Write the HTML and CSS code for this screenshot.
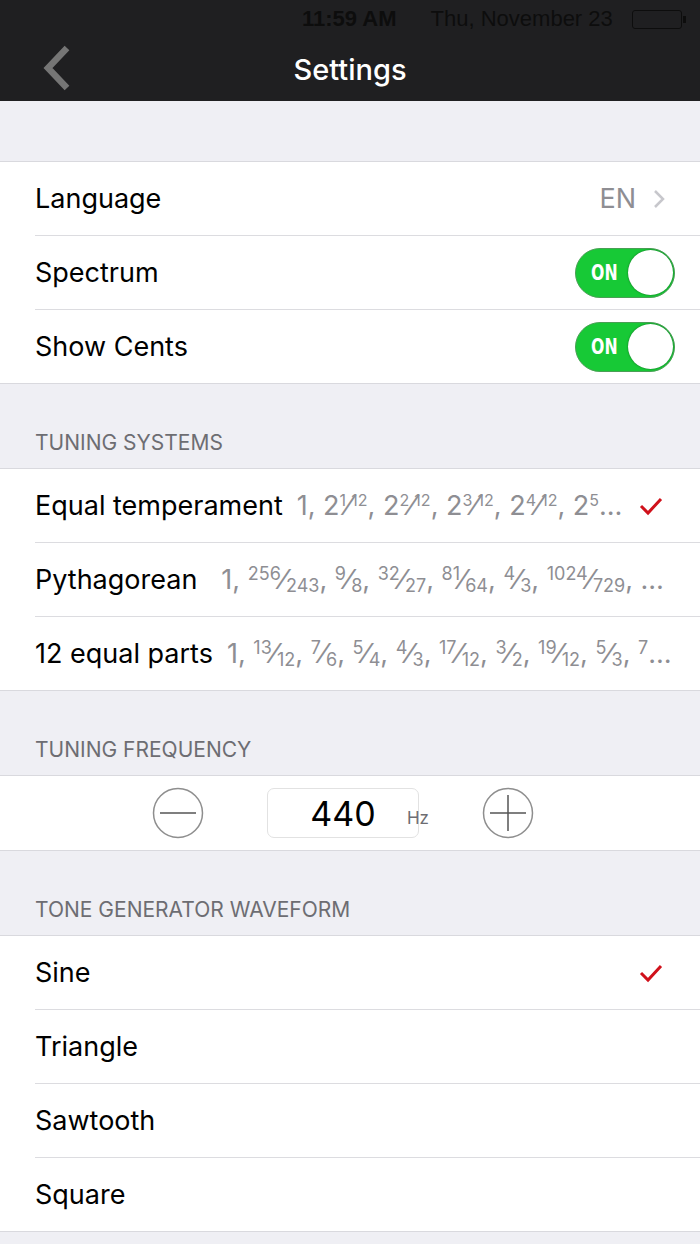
FILE: index.html
```html
<!DOCTYPE html>
<html lang="en">
<head>
    <meta charset="UTF-8">
    <meta name="viewport" content="width=device-width, initial-scale=1.0">
    <title>Settings</title>
    <link rel="stylesheet" href="styles.css">
</head>
<body>
    <header class="topbar">
        <div class="status">
            <span class="status-time">11:59 AM</span>
            <span class="status-date">Thu, November 23</span>
            <span class="battery"><span class="battery-cap"></span></span>
        </div>
        <div class="navbar">
            <svg class="back" width="32" height="46" viewBox="0 0 32 46">
                <path d="M27 3 L8 23 L27 43" fill="none" stroke="#757575" stroke-width="6.5"/>
            </svg>
            <h1>Settings</h1>
        </div>
    </header>

    <div class="spacer"></div>

    <ul class="group">
        <li class="row">
            <span class="label">Language</span>
            <span class="detail">EN</span>
            <svg class="chevron" width="14" height="20" viewBox="0 0 14 20">
                <path d="M3 2 L11 10 L3 18" fill="none" stroke="#c7c7cc" stroke-width="2.5"/>
            </svg>
        </li>
        <li class="row">
            <span class="label">Spectrum</span>
            <span class="switch"><span class="switch-text">ON</span><span class="knob"></span></span>
        </li>
        <li class="row">
            <span class="label">Show Cents</span>
            <span class="switch"><span class="switch-text">ON</span><span class="knob"></span></span>
        </li>
    </ul>

    <h2 class="group-title">TUNING SYSTEMS</h2>
    <ul class="group">
        <li class="row">
            <span class="label">Equal temperament</span>
            <span class="values powers">1, 2<sup>1</sup>&frasl;<sup>12</sup>, 2<sup>2</sup>&frasl;<sup>12</sup>, 2<sup>3</sup>&frasl;<sup>12</sup>, 2<sup>4</sup>&frasl;<sup>12</sup>, 2<sup>5</sup>&frasl;<sup>12</sup>, 2<sup>6</sup>&frasl;<sup>12</sup></span>
            <svg class="check" width="24" height="20" viewBox="0 0 24 20">
                <path d="M2 10 L9 17 L22 3" fill="none" stroke="#d0111b" stroke-width="3"/>
            </svg>
        </li>
        <li class="row">
            <span class="label">Pythagorean</span>
            <span class="values wide">1, <sup>256</sup>&frasl;<sub>243</sub>, <sup>9</sup>&frasl;<sub>8</sub>, <sup>32</sup>&frasl;<sub>27</sub>, <sup>81</sup>&frasl;<sub>64</sub>, <sup>4</sup>&frasl;<sub>3</sub>, <sup>1024</sup>&frasl;<sub>729</sub>, <sup>3</sup>&frasl;<sub>2</sub>, <sup>128</sup>&frasl;<sub>81</sub></span>
        </li>
        <li class="row">
            <span class="label">12 equal parts</span>
            <span class="values">1, <sup>13</sup>&frasl;<sub>12</sub>, <sup>7</sup>&frasl;<sub>6</sub>, <sup>5</sup>&frasl;<sub>4</sub>, <sup>4</sup>&frasl;<sub>3</sub>, <sup>17</sup>&frasl;<sub>12</sub>, <sup>3</sup>&frasl;<sub>2</sub>, <sup>19</sup>&frasl;<sub>12</sub>, <sup>5</sup>&frasl;<sub>3</sub>, <sup>7</sup>&frasl;<sub>4</sub>, <sup>23</sup>&frasl;<sub>12</sub></span>
        </li>
    </ul>

    <h2 class="group-title">TUNING FREQUENCY</h2>
    <div class="group freq">
        <svg class="round-btn" width="52" height="52" viewBox="0 0 52 52">
            <circle cx="26" cy="26" r="24.5" fill="none" stroke="#8e8e8e" stroke-width="1.5"/>
            <path d="M8 26 H44" stroke="#555" stroke-width="1.5"/>
        </svg>
        <div class="freq-box">
            <span class="freq-value">440</span>
            <span class="freq-unit">Hz</span>
        </div>
        <svg class="round-btn" width="52" height="52" viewBox="0 0 52 52">
            <circle cx="26" cy="26" r="24.5" fill="none" stroke="#8e8e8e" stroke-width="1.5"/>
            <path d="M8 26 H44 M26 8 V44" stroke="#555" stroke-width="1.5"/>
        </svg>
    </div>

    <h2 class="group-title">TONE GENERATOR WAVEFORM</h2>
    <ul class="group">
        <li class="row">
            <span class="label">Sine</span>
            <svg class="check" width="24" height="20" viewBox="0 0 24 20">
                <path d="M2 10 L9 17 L22 3" fill="none" stroke="#d0111b" stroke-width="3"/>
            </svg>
        </li>
        <li class="row"><span class="label">Triangle</span></li>
        <li class="row"><span class="label">Sawtooth</span></li>
        <li class="row"><span class="label">Square</span></li>
    </ul>
</body>
</html>
```

FILE: styles.css
```css
body {
    margin: 0;
    background-color: #efeff4;
    font-family: Inter, Roboto, "Liberation Sans", sans-serif;
    color: #000;
}
.topbar {
    background-color: #1f1f21;
    height: 101px;
    display: flex;
    flex-direction: column;
}
.status {
    height: 38px;
    display: flex;
    align-items: center;
    padding-left: 302px;
    font-family: "Liberation Sans", Arial, sans-serif;
    font-size: 22px;
    color: #0d0d0d;
}
.status-time {
    font-weight: bold;
    margin-right: 34px;
}
.status-date {
    margin-right: 19px;
}
.battery {
    width: 48px;
    height: 17px;
    border: 1.5px solid #0d0d0d;
    border-radius: 3px;
    position: relative;
}
.battery-cap {
    position: absolute;
    right: -5px;
    top: 5px;
    width: 3px;
    height: 7px;
    background-color: #0d0d0d;
}
.navbar {
    flex: 1;
    display: flex;
    align-items: center;
    justify-content: center;
    position: relative;
}
.navbar h1 {
    margin: 0;
    font-size: 29px;
    font-weight: 500;
    color: #fff;
}
.back {
    position: absolute;
    left: 40px;
    top: 7px;
}
.spacer {
    height: 60px;
}
.group {
    list-style: none;
    margin: 0;
    padding: 0;
    background-color: #fff;
    border-top: 1px solid #d9d9de;
    border-bottom: 1px solid #d9d9de;
}
.row {
    height: 73px;
    margin-left: 35px;
    padding-right: 25px;
    display: flex;
    align-items: center;
    border-bottom: 1px solid #dcdce0;
    font-size: 27px;
}
.row:last-child {
    border-bottom: none;
}
.label {
    white-space: nowrap;
    flex-shrink: 0;
}
.detail {
    margin-left: auto;
    color: #8e8e93;
    margin-right: 16px;
}
.chevron {
    margin-right: 9px;
}
.switch {
    margin-left: auto;
    width: 100px;
    height: 50px;
    box-sizing: border-box;
    border-radius: 25px;
    background-color: #17c936;
    border: 1.5px solid #4a9f55;
    display: flex;
    align-items: center;
    justify-content: space-between;
    padding: 0 1px 0 15px;
}
.switch-text {
    display: inline-block;
    color: #fff;
    font-family: "DejaVu Sans", sans-serif;
    font-weight: bold;
    font-size: 21px;
    transform: scaleX(0.75);
    transform-origin: left center;
}
.knob {
    width: 45px;
    height: 45px;
    border-radius: 50%;
    background-color: #fff;
    box-shadow: 0 0 2px rgba(0, 0, 0, 0.5);
}
.values {
    flex: 1;
    min-width: 0;
    margin-left: 14px;
    color: #8e8e93;
    white-space: nowrap;
    overflow: hidden;
    text-overflow: ellipsis;
}
.values.wide {
    margin-left: 24px;
}
.values sup,
.values sub {
    font-size: 18px;
    line-height: 0;
}
.values.powers sup {
    font-size: 16px;
}
.values sup {
    vertical-align: 9px;
}
.values sub {
    vertical-align: -3px;
}
.check {
    margin-left: auto;
    padding-left: 12px;
    margin-right: 12px;
    flex-shrink: 0;
}
.group-title {
    margin: 0;
    height: 84px;
    box-sizing: border-box;
    padding: 46px 0 0 35px;
    font-size: 21px;
    font-weight: normal;
    color: #6d6d72;
}
.freq {
    height: 74px;
    display: flex;
    align-items: center;
    padding-left: 152px;
    gap: 63px;
}
.freq-box {
    width: 152px;
    height: 50px;
    box-sizing: border-box;
    border: 1px solid #e2e2e2;
    border-radius: 7px;
    position: relative;
    display: flex;
    align-items: center;
    justify-content: center;
}
.freq-value {
    font-size: 34px;
}
.freq-unit {
    position: absolute;
    right: -11px;
    bottom: 9px;
    font-size: 17px;
    color: #6d6d72;
}
```
